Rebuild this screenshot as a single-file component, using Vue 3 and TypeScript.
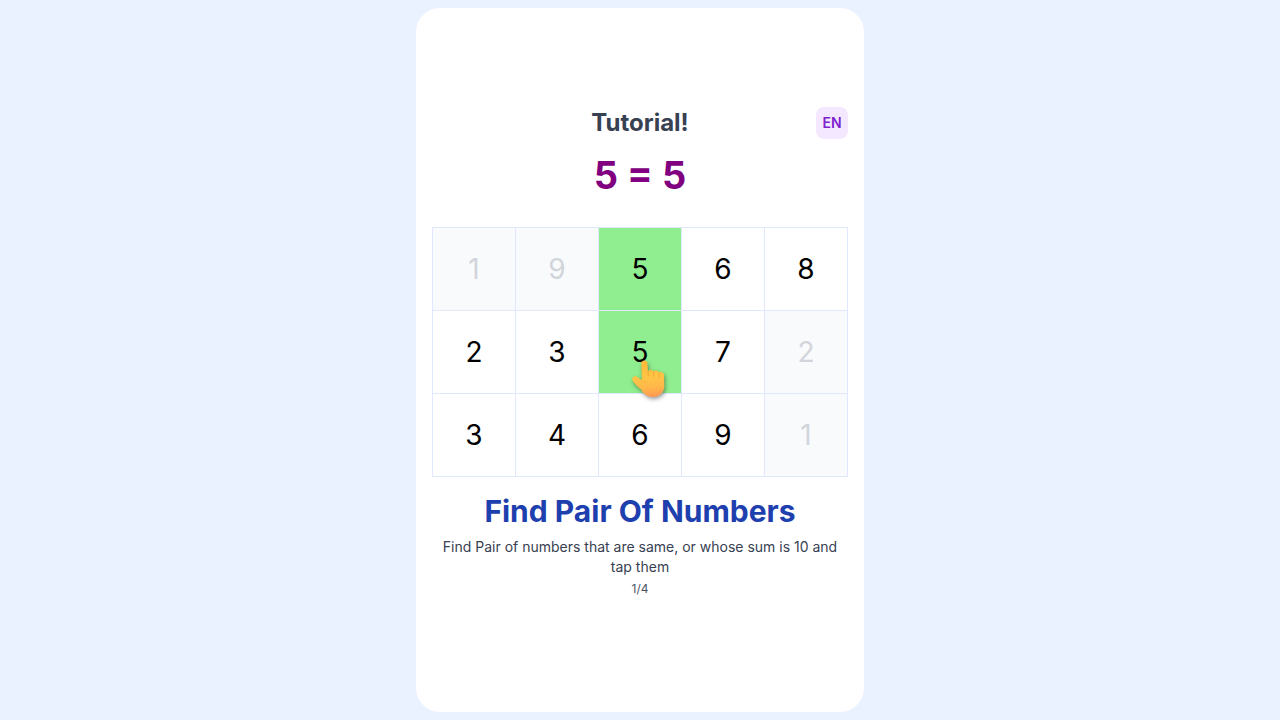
<script setup lang="ts">
import { ref } from 'vue'

interface Cell {
  value: number
  state: 'open' | 'cleared' | 'matched'
  pointer?: boolean
}

const open = (value: number): Cell => ({ value, state: 'open' })
const cleared = (value: number): Cell => ({ value, state: 'cleared' })

const cells = ref<Cell[]>([
  cleared(1), cleared(9), { value: 5, state: 'matched' }, open(6), open(8),
  open(2), open(3), { value: 5, state: 'matched', pointer: true }, open(7), cleared(2),
  open(3), open(4), open(6), open(9), cleared(1),
])
</script>

<template>
  <main class="page">
    <section class="card">
      <header class="top">
        <h1 class="title">Tutorial!</h1>
        <button class="lang" type="button">EN</button>
      </header>
      <p class="equation">5 = 5</p>
      <div class="board">
        <button
          v-for="(cell, i) in cells"
          :key="i"
          type="button"
          class="cell"
          :class="cell.state"
        >
          {{ cell.value }}
          <svg v-if="cell.pointer" class="hand" viewBox="30 54 111 126" aria-hidden="true">
            <defs>
              <linearGradient id="skin" x1="0.4" y1="0" x2="0.5" y2="1">
                <stop offset="0" stop-color="#ffb739" />
                <stop offset="0.45" stop-color="#ffc546" />
                <stop offset="0.75" stop-color="#ffb74a" />
                <stop offset="1" stop-color="#ff9a52" />
              </linearGradient>
            </defs>
            <path
              fill="url(#skin)"
              d="M64 70C64 59 82 59 82 70L84 95C87 87 98 88 101 95C105 89 115 91 117 98C123 94 132 97 132 105L133 138C133 158 118 171 98 171C79 171 70 160 63 148C55 142 45 132 38 122C33 113 42 105 51 110L66 121Z"
            />
            <path
              class="crease"
              d="M84 94L85 108M101 96L102 110M117 99L118 112"
            />
            <path class="thumb" d="M66 119C69 124 73 127 78 127" />
          </svg>
        </button>
      </div>
      <h2 class="heading">Find Pair Of Numbers</h2>
      <p class="text">Find Pair of numbers that are same, or whose sum is 10 and tap them</p>
      <p class="step">1/4</p>
    </section>
  </main>
</template>

<style>
body {
  margin: 0;
  background: #eaf1ff;
}
</style>

<style scoped>
.page {
  box-sizing: border-box;
  min-height: 100vh;
  padding: 8px;
  display: flex;
  justify-content: center;
  background: #eaf1ff;
  font-family: Inter, "Liberation Sans", sans-serif;
}
.card {
  box-sizing: border-box;
  width: 100%;
  max-width: 448px;
  padding: 16px;
  border-radius: 24px;
  background: #fff;
  display: flex;
  flex-direction: column;
  justify-content: center;
  text-align: center;
}
h1, h2, p {
  margin: 0;
}
.top {
  display: grid;
  grid-template-columns: 32px 1fr 32px;
  align-items: center;
}
.title {
  grid-column: 2;
  font-size: 24px;
  line-height: 32px;
  font-weight: 700;
  color: #374151;
}
.lang {
  height: 32px;
  padding: 0;
  border: 0;
  border-radius: 8px;
  background: #f3e8ff;
  color: #7e22ce;
  font: 600 14px/20px Inter, sans-serif;
}
.equation {
  margin: 8px 0 24px;
  font-size: 38px;
  line-height: 56px;
  font-weight: 700;
  color: #800080;
}
.board {
  display: grid;
  grid-template-columns: repeat(5, 1fr);
  border: solid #e0e7ff;
  border-width: 1px 0 0 1px;
}
.cell {
  position: relative;
  box-sizing: border-box;
  aspect-ratio: 1;
  padding: 0;
  border: solid #e0e7ff;
  border-width: 0 1px 1px 0;
  background: #fff;
  color: #000;
  font: 400 28px/36px Inter, sans-serif;
}
.cleared {
  background: #f9fafb;
  color: #d1d5db;
}
.matched {
  background: #90ee90;
}
.hand {
  position: absolute;
  z-index: 1;
  left: 31px;
  top: 47px;
  width: 37px;
  height: 42px;
  overflow: visible;
  pointer-events: none;
  filter: drop-shadow(1px 2px 2px rgb(0 0 0 / 40%));
}
.crease,
.thumb {
  fill: none;
  stroke: #f9a637;
  stroke-width: 3;
  stroke-linecap: round;
}
.thumb {
  stroke: #ffb53c;
}
.heading {
  margin-top: 16px;
  font-size: 30px;
  line-height: 36px;
  font-weight: 700;
  color: #1e40af;
}
.text {
  margin-top: 8px;
  font-size: 14px;
  line-height: 20px;
  color: #374151;
}
.step {
  margin: 4px 0 16px;
  font-size: 12px;
  line-height: 16px;
  color: #4b5563;
}
</style>
